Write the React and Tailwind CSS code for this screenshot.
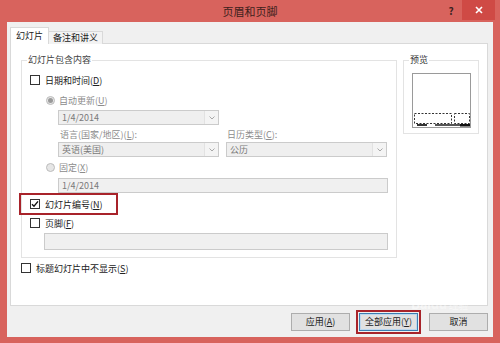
import React from 'react';

const font = { fontFamily: '"Noto Sans CJK SC", "Noto Sans", sans-serif' };

const CheckBox = ({ checked = false }) => (
  <span className="w-[10px] h-[10px] border border-[#333333] bg-white flex items-center justify-center shrink-0">
    {checked && (
      <svg width="8" height="8" viewBox="0 0 8 8">
        <path d="M1 4.2 L3 6.2 L7 1.4" fill="none" stroke="#111" strokeWidth="1.4" />
      </svg>
    )}
  </span>
);

const Radio = ({ checked = false }) => (
  <span className="w-[9px] h-[9px] rounded-full border border-[#bcbcbc] bg-[#e6e6e6] flex items-center justify-center shrink-0">
    {checked && <span className="w-[5px] h-[5px] rounded-full bg-[#9a9a9a]" />}
  </span>
);

const Select = ({ value, width }) => (
  <div className={`${width} h-[15px] border border-[#cbcbcb] bg-[#efefef] flex items-center`}>
    <span className="flex-1 pl-[3px] text-[9px] text-[#7a7a7a] leading-none">{value}</span>
    <span className="w-[14px] h-full bg-[#f4f4f4] border-l border-[#e2e2e2] flex items-center justify-center">
      <svg width="6" height="4" viewBox="0 0 6 4">
        <path d="M0.5 0.5 L3 3 L5.5 0.5" fill="none" stroke="#a8a8a8" strokeWidth="1" />
      </svg>
    </span>
  </div>
);

const Button = ({ children, primary = false }) => (
  <div
    className={`w-[59px] h-[18px] flex items-center justify-center text-[9px] text-[#222] bg-[#e1e1e1] border ${
      primary ? 'border-[#3c7fb1] shadow-[inset_0_0_0_1px_#bcd7ee]' : 'border-[#adadad]'
    }`}
  >
    {children}
  </div>
);

export default function App() {
  return (
    <div className="w-[500px] h-[343px] bg-[#d8635d] flex flex-col overflow-hidden" style={font}>
      {/* title bar */}
      <div className="h-[22px] shrink-0 flex items-start relative">
        <div className="flex-1 h-[22px] flex items-center justify-center text-[11px] text-[#3d1f1c]">
          页眉和页脚
        </div>
        <div className="absolute right-[5px] top-0 flex items-start">
          <span className="w-[16px] h-[20px] flex items-center justify-center text-[10px] font-bold text-[#3a2222] mr-[3px]">?</span>
          <span className="w-[33px] h-[20px] bg-[#cf4a45] flex items-center justify-center">
            <svg width="8" height="8" viewBox="0 0 8 8">
              <path d="M1 1 L7 7 M7 1 L1 7" stroke="#fff" strokeWidth="1.6" />
            </svg>
          </span>
        </div>
      </div>

      {/* dialog body */}
      <div className="mx-[7px] mb-[6px] flex-1 bg-[#f0f0f0] flex flex-col pl-[3px] pr-[5px] pt-[6px]">
        {/* tabs */}
        <div className="h-[16px] flex items-end relative z-10 -mb-px">
          <div className="w-[39px] h-[17px] bg-white border border-b-0 border-[#d9d9d9] flex items-center justify-center text-[9px] text-[#222]">
            幻灯片
          </div>
          <div className="w-[54px] h-[13px] bg-[#f3f3f3] border border-l-0 border-b-0 border-[#d9d9d9] flex items-center justify-center text-[9px] text-[#222]">
            备注和讲义
          </div>
        </div>

        {/* tab panel */}
        <div className="h-[263px] bg-white border border-[#d9d9d9] pl-[10px] pt-[10px] flex flex-col">
          <div className="flex items-start">
            <fieldset className="w-[376px] h-[204px] border border-[#e3e3e3] pb-[8px]">
              <legend className="ml-[5px] px-[1px] text-[9px] leading-[12px] text-[#444]">幻灯片包含内容</legend>
              <div className="flex flex-col pl-[8px] pr-[8px] text-[9px] leading-none">
                <div className="h-[14px] mt-[7px] flex items-center gap-[5px] text-[#222]">
                  <CheckBox />
                  <span>日期和时间(<span className="underline">D</span>)</span>
                </div>
                <div className="h-[14px] mt-[6px] ml-[16px] flex items-center gap-[4px] text-[#8c8c8c]">
                  <Radio checked />
                  <span>自动更新(<span className="underline">U</span>)</span>
                </div>
                <div className="mt-[3px] ml-[28px]">
                  <Select value="1/4/2014" width="w-[161px]" />
                </div>
                <div className="h-[12px] mt-[3px] ml-[30px] flex items-center text-[#8c8c8c]">
                  <span className="w-[167px]">语言(国家/地区)(<span className="underline">L</span>):</span>
                  <span>日历类型(<span className="underline">C</span>):</span>
                </div>
                <div className="mt-[2px] ml-[28px] flex gap-[7px]">
                  <Select value="英语(美国)" width="w-[161px]" />
                  <Select value="公历" width="w-[161px]" />
                </div>
                <div className="h-[14px] mt-[3px] ml-[16px] flex items-center gap-[4px] text-[#8c8c8c]">
                  <Radio />
                  <span>固定(<span className="underline">X</span>)</span>
                </div>
                <div className="mt-[4px] ml-[28px] h-[15px] border border-[#cbcbcb] bg-[#f0f0f0] flex items-center pl-[3px] text-[#7a7a7a]">
                  1/4/2014
                </div>
                <div className="h-[14px] mt-[4px] flex items-center gap-[5px] text-[#222] relative">
                  <CheckBox checked />
                  <span>幻灯片编号(<span className="underline">N</span>)</span>
                  <span className="absolute left-[-11px] top-[-4px] w-[99px] h-[22px] border-2 border-[#a8232a]" />
                </div>
                <div className="h-[14px] mt-[5px] flex items-center gap-[5px] text-[#222]">
                  <CheckBox />
                  <span>页脚(<span className="underline">F</span>)</span>
                </div>
                <div className="mt-[3px] ml-[14px] h-[17px] border border-[#cbcbcb] bg-[#f0f0f0]" />
              </div>
            </fieldset>

            <fieldset className="ml-[6px] w-[76px] h-[80px] border border-[#e3e3e3]">
              <legend className="ml-[5px] px-[1px] text-[9px] leading-[12px] text-[#333]">预览</legend>
              <div className="mt-[7px] ml-[8px] w-[59px] h-[55px] border border-[#9a9a9a] bg-white">
                <svg width="57" height="53" viewBox="0 0 57 53">
                  <rect x="1.5" y="39.5" width="37" height="10" fill="none" stroke="#333" strokeWidth="1" strokeDasharray="2 1.5" />
                  <rect x="41.5" y="39.5" width="15" height="10" fill="none" stroke="#333" strokeWidth="1" strokeDasharray="2 1.5" />
                  <rect x="4" y="50" width="10" height="2" fill="#333" />
                  <rect x="22" y="50" width="25" height="2" fill="#555" />
                  <rect x="47" y="50" width="10" height="2.5" fill="#111" />
                </svg>
              </div>
            </fieldset>
          </div>

          <div className="h-[14px] mt-[3px] flex items-center gap-[5px] text-[9px] leading-none text-[#222]">
            <CheckBox />
            <span>标题幻灯片中不显示(<span className="underline">S</span>)</span>
          </div>
        </div>

        {/* buttons */}
        <div className="h-[31px] flex justify-end items-center relative">
          <Button>应用(<span className="underline">A</span>)</Button>
          <div className="ml-[6px] p-[1px] border-2 border-[#a8232a]">
            <Button primary>全部应用(<span className="underline">Y</span>)</Button>
          </div>
          <div className="ml-[8px]">
            <Button>取消</Button>
          </div>
          <span className="absolute right-[20px] top-[-12px] text-[13px] font-bold text-white/50 tracking-tight">
            Bai<span className="text-white/40">du</span>
            <span className="text-[10px] font-normal ml-[2px]">经验</span>
          </span>
        </div>
      </div>
    </div>
  );
}
